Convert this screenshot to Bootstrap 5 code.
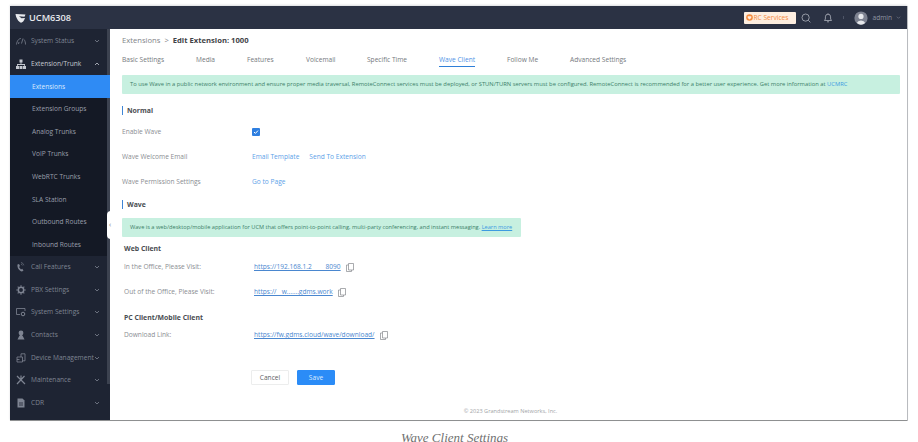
<!DOCTYPE html>
<html lang="en">
<head>
<meta charset="UTF-8">
<title>Wave Client Settings</title>
<link href="https://cdn.jsdelivr.net/npm/bootstrap@5.3.0/dist/css/bootstrap.min.css" rel="stylesheet">
<style>
  html, body { height: 100%; overflow: hidden; }
  body { background: #fff; font-family: "Open Sans", "Liberation Sans", sans-serif; font-size: 6.6px; color: #8a8d92; }
  .frame { margin: 6px 10px 0 10px; width: 897px; height: 415px; box-shadow: 1px 0 0 #b9bbbf, 0 -1px 2px #dcdde0; border-bottom: 1px solid #8e9091; }
  .topbar { height: 23px; background: #2b3244; color: #fff; padding: 0 6px 0 5px; flex: none; }
  .brand { font-size: 9.2px; font-weight: 600; color: #e8eaee; margin-left: 3px; }
  .rc-tag { background: #fdeee0; color: #f58a3c; font-size: 6.6px; height: 12px; padding: 0 2px; border-radius: 1px; width: 52px; margin-right: 5px; }
  .top-gap { margin-left: 12px; }
  .top-sep { width: 1px; height: 3px; background: #4e5567; margin-left: 10px; margin-right: 10px; }
  .who { color: #8f95a3; font-size: 6.6px; margin-left: 4px; }
  .sidebar { width: 100px; background: #1e2433; flex: none; padding-top: 1px; position: relative; }
  .side-thumb { position: absolute; right: 0; top: 0; width: 3px; height: 355px; background: #3c4250; }
  .side-item { height: 22.6px; color: #7e8492; padding: 0 10px 0 6px; white-space: nowrap; position: relative; z-index: 1; }
  .side-item.open { color: #c4c8d0; }
  .side-sub { background: #141925; }
  .side-sub .side-item { padding-left: 22px; color: #9a9fab; }
  .side-item.current { background: #2f8bf4; color: #dbeafc; }
  .side-label { flex: 1; overflow: hidden; }
  .side-ico { width: 10px; height: 10px; margin-right: 5px; flex: none; }
  .collapse-tab { position: absolute; left: 97px; top: 182px; width: 6px; height: 28px; background: #fff; border-radius: 4px 0 0 4px; color: #777; font-size: 7px; line-height: 28px; text-align: center; z-index: 2; }
  .main-pane { padding: 0 7px 0 12px; min-width: 0; position: relative; }
  .crumbs { height: 22px; padding-top: 6px; font-size: 7.65px; color: #7f8388; font-weight: 500; }
  .crumbs b { color: #3f4347; font-weight: 700; }
  .tab-row { height: 24px; color: #75797e; }
  .tab-cell { height: 16px; line-height: 18px; }
  .tab-cell.on { color: #4f93e6; border-bottom: 1px solid #2f7fd8; }
  .note { background: #c7f0e0; color: #3c7f68; font-size: 5.8px; height: 19px; line-height: 19px; padding-left: 8px; white-space: nowrap; overflow: hidden; border-radius: 1px; }
  .note a { color: #3d9be0; }
  .note-second { width: 399px; margin-top: 9px; font-size: 5.65px; }
  .note-second a { text-decoration: underline; }
  .sect { font-size: 6.9px; font-weight: 700; color: #4a4d52; height: 9px; line-height: 9px; border-left: 1px solid #3f86d6; padding-left: 4px; }
  .sect-normal { margin-top: 12px; }
  .sect-wave { margin-top: 6px; }
  .form-line { height: 24.6px; }
  .line-first { margin-top: 5px; }
  .form-key { width: 130px; flex: none; }
  .form-line a { color: #5da2e8; text-decoration: none; }
  .link-gap { margin-right: 10px; }
  .tick { width: 8px; height: 8px; background: #2f7fe0; border-radius: 1px; }
  .sub-title { font-weight: 700; color: #4a4d52; padding-left: 2px; height: 10px; line-height: 10px; font-size: 6.9px; }
  .title-web { margin-top: 7px; }
  .title-pc { margin-top: 8px; }
  .visit-first { margin-top: 1px; }
  .visit-row { height: 25px; padding-left: 2px; }
  .visit-key { width: 130px; flex: none; }
  .visit-row a { color: #4a87cf; text-decoration: underline; }
  .copy-ico { width: 8px; height: 9px; margin-left: 5px; }
  .act-row { margin-top: 22px; padding-left: 129px; }
  .act-btn { height: 15px; width: 38px; font-size: 6.6px; padding: 0; line-height: 13px; border-radius: 1px; }
  .act-cancel { border: 1px solid #eceded; color: #5c6064; background: #fff; }
  .act-save { border: 1px solid #2b8cf7; background: #2b8cf7; color: #dcebfd; }
  .legal { font-size: 5.6px; color: #a2a4a7; text-align: center; position: absolute; left: 0; right: 0; bottom: 5px; padding-left: 4px; }
  .caption { font-family: "Liberation Serif", serif; font-style: italic; font-size: 13px; color: #6f6f6f; text-align: center; margin-top: 7px; padding-right: 9px; }
</style>
</head>
<body>
<div class="frame d-flex flex-column">
  <div class="topbar d-flex align-items-center">
    <svg width="11" height="10" viewBox="0 0 11 10"><path d="M0.5 1 L10.500 1.500 L9.500 3.800 L4 3.200 L6.500 5.300 L10 5 C9 8 7.500 9.500 6 9.800 C3.500 8.800 1 5 0.500 1 Z" fill="#e8eaee"/></svg>
    <span class="brand">UCM6308</span>
    <div class="ms-auto d-flex align-items-center">
      <span class="rc-tag d-flex align-items-center">
        <svg width="7" height="7" viewBox="0 0 8 8"><circle cx="4" cy="4" r="3.800" fill="#f58a3c"/><path d="M2 2.500h4v2L4 6.200 2 4.500z" fill="#fdeee0"/></svg>RC Services
      </span>
      <svg width="10" height="10" viewBox="0 0 10 10" fill="none" stroke="#aeb3bd" stroke-width=".8"><circle cx="4.600" cy="4.600" r="3.600"/><path d="M7.300 7.300 9.400 9.400"/></svg>
      <svg width="10" height="10" viewBox="0 0 10 10" class="top-gap" fill="none" stroke="#aeb3bd" stroke-width=".8"><path d="M1.500 7.500h7L7.600 6V3.800a2.600 2.600 0 0 0-5.200 0V6zM4 8.800h2M5 .4v.8"/></svg>
      <span class="top-sep"></span>
      <svg width="14" height="14" viewBox="0 0 14 14"><circle cx="7" cy="7" r="6.600" fill="#7d8291"/><circle cx="7" cy="5.400" r="2.600" fill="#e6e8ec"/><path d="M2.800 12a4.400 3.600 0 0 1 8.400 0 6.600 6.600 0 0 1-8.400 0z" fill="#e6e8ec"/></svg>
      <span class="who">admin</span>
      <svg width="5" height="5" viewBox="0 0 6 6" class="ms-1" fill="none" stroke="#777d8b" stroke-width=".8"><path d="M1 2l2 2 2-2"/></svg>
    </div>
  </div>
  <div class="d-flex flex-grow-1 position-relative">
    <div class="sidebar">
      <div class="side-thumb"></div>
      <div id="topItems"></div>
      <div class="side-sub" id="subItems"></div>
      <div id="bottomItems"></div>
    </div>
    <div class="collapse-tab">‹</div>
    <div class="main-pane flex-grow-1">
      <div class="crumbs">Extensions &nbsp;&gt;&nbsp; <b>Edit Extension: 1000</b></div>
      <div class="tab-row d-flex" id="tabRow"></div>
      <div class="note">To use Wave in a public network environment and ensure proper media traversal, RemoteConnect services must be deployed, or STUN/TURN servers must be configured. RemoteConnect is recommended for a better user experience. Get more information at <a href="#" class="text-decoration-none">UCMRC</a></div>
      <div class="sect sect-normal">Normal</div>
      <div class="form-line line-first d-flex align-items-center"><div class="form-key">Enable Wave</div><span class="tick d-flex align-items-center justify-content-center"><svg width="6" height="6" viewBox="0 0 6 6" fill="none" stroke="#fff" stroke-width="1"><path d="M1 3l1.400 1.400L5 1.600"/></svg></span></div>
      <div class="form-line d-flex align-items-center"><div class="form-key">Wave Welcome Email</div><a href="#" class="link-gap">Email Template</a><a href="#">Send To Extension</a></div>
      <div class="form-line d-flex align-items-center"><div class="form-key">Wave Permission Settings</div><a href="#">Go to Page</a></div>
      <div class="sect sect-wave">Wave</div>
      <div class="note note-second">Wave is a web/desktop/mobile application for UCM that offers point-to-point calling, multi-party conferencing, and instant messaging. <a href="#">Learn more</a></div>
      <div class="sub-title title-web">Web Client</div>
      <div class="visit-row visit-first d-flex align-items-center"><div class="visit-key">In the Office, Please Visit:</div><a href="#">https://192.168.1.2&nbsp;&nbsp;&nbsp;&nbsp;&nbsp;&nbsp;&nbsp;&nbsp;8090</a><svg class="copy-ico" viewBox="0 0 8 9" fill="none" stroke="#85888c" stroke-width=".7"><path d="M2.500.5h5v6.500h-5zM.5 2h2M.5 2v6.500h5V7"/></svg></div>
      <div class="visit-row d-flex align-items-center"><div class="visit-key">Out of the Office, Please Visit:</div><a href="#">https://&nbsp;&nbsp;&nbsp;w.......gdms.work</a><svg class="copy-ico" viewBox="0 0 8 9" fill="none" stroke="#85888c" stroke-width=".7"><path d="M2.500.5h5v6.500h-5zM.5 2h2M.5 2v6.500h5V7"/></svg></div>
      <div class="sub-title title-pc">PC Client/Mobile Client</div>
      <div class="visit-row d-flex align-items-center"><div class="visit-key">Download Link:</div><a href="#">https://fw.gdms.cloud/wave/download/</a><svg class="copy-ico" viewBox="0 0 8 9" fill="none" stroke="#85888c" stroke-width=".7"><path d="M2.500.5h5v6.500h-5zM.5 2h2M.5 2v6.500h5V7"/></svg></div>
      <div class="d-flex gap-2 act-row">
        <button class="btn act-btn act-cancel">Cancel</button>
        <button class="btn act-btn act-save">Save</button>
      </div>
      <div class="legal">© 2023 Grandstream Networks, Inc.</div>
    </div>
  </div>
</div>
<div class="caption">Wave Client Settings</div>

<script>
  // sidebar icons, drawn small
  const ico = {
    gauge: '<path d="M.5 8.500C1 4.500 3 2.500 5 2.500M5.500 7.500 7 2.500M8 3.500c1 1.200 1.500 3 1.500 5M3 6 2.500 8" fill="none" stroke="currentColor" stroke-width=".8"/>',
    tree: '<path d="M3.500 0.500h3v3h-3zM0 7h3v3H0zM3.500 7h3v3h-3zM7 7h3v3H7zM4.600 3.500v1.600H1v2h.8V6h6.400v1H9V5.100H5.400V3.500z" fill="currentColor"/>',
    phone: '<path d="M1.500 2.500 3 2l1 2-1 1 2 2.500 1.200-.7 1.300 1.700-1.500 1C3 9 1 5.500 1.500 2.500z" fill="currentColor"/><path d="M5 .5c1.500.3 2.500 1.300 2.800 2.800M5 2c.7.200 1.200.7 1.400 1.400" fill="none" stroke="currentColor" stroke-width=".6"/>',
    gear: '<circle cx="5" cy="5" r="2.700" fill="none" stroke="currentColor" stroke-width="1.500"/><path d="M5 .3v1.500M5 8.200v1.500M.3 5h1.500M8.200 5h1.500M1.700 1.700l1 1M7.300 7.300l1 1M1.700 8.300l1-1M7.300 2.700l1-1" stroke="currentColor" stroke-width="1.100"/>',
    screen: '<path d="M4 7.500H.5v-6h8.500v2.500" fill="none" stroke="currentColor" stroke-width=".8"/><circle cx="7" cy="7" r="1.800" fill="none" stroke="currentColor" stroke-width="1"/>',
    person: '<circle cx="5" cy="3" r="2.400" fill="currentColor"/><path d="M1.500 9.500h7L7 6.500 6 5H4L3 6.500z" fill="currentColor"/>',
    device: '<path d="M1 4h5.500v5H1zM5 4V.8h4v7H6.500M1 6.500h2.500" fill="none" stroke="currentColor" stroke-width=".8"/>',
    tools: '<path d="M1 1l8 8M8.500 1 1 9M5 .5 5 5" stroke="currentColor" stroke-width="1.200"/>',
    doc: '<path d="M1.500 .5h5l2 2v7h-7z" fill="currentColor"/><path d="M3 5h4M3 7h4" stroke="#1e2433" stroke-width=".8"/>'
  };
  function sideRow(label, icon, open) {
    const chev = open ? 'M1 4l2-2 2 2' : 'M1 2l2 2 2-2';
    return `<div class="side-item d-flex align-items-center ${open ? 'open' : ''}">
      <svg class="side-ico" viewBox="0 0 10 10">${ico[icon]}</svg>
      <span class="side-label">${label}</span>
      <svg width="6" height="6" viewBox="0 0 6 6" fill="none" stroke="currentColor" stroke-width=".8"><path d="${chev}"/></svg>
    </div>`;
  }
  document.getElementById("topItems").innerHTML = sideRow("System Status", "gauge") + sideRow("Extension/Trunk", "tree", true);
  document.getElementById("subItems").innerHTML = ["Extensions", "Extension Groups", "Analog Trunks", "VoIP Trunks", "WebRTC Trunks", "SLA Station", "Outbound Routes", "Inbound Routes"]
    .map((t, i) => `<div class="side-item d-flex align-items-center ${i === 0 ? 'current' : ''}">${t}</div>`).join("");
  document.getElementById("bottomItems").innerHTML = [["Call Features", "phone"], ["PBX Settings", "gear"], ["System Settings", "screen"], ["Contacts", "person"], ["Device Management", "device"], ["Maintenance", "tools"], ["CDR", "doc"]]
    .map(r => sideRow(r[0], r[1])).join("");

  const tabs = [["Basic Settings", 74], ["Media", 51], ["Features", 59], ["Voicemail", 61], ["Specific Time", 72], ["Wave Client", 68], ["Follow Me", 63], ["Advanced Settings", 80]];
  document.getElementById("tabRow").innerHTML = tabs
    .map((t, i) => `<div style="width:${t[1]}px"><span class="tab-cell d-inline-block ${i === 5 ? 'on' : ''}">${t[0]}</span></div>`).join("");
</script>
</body>
</html>
